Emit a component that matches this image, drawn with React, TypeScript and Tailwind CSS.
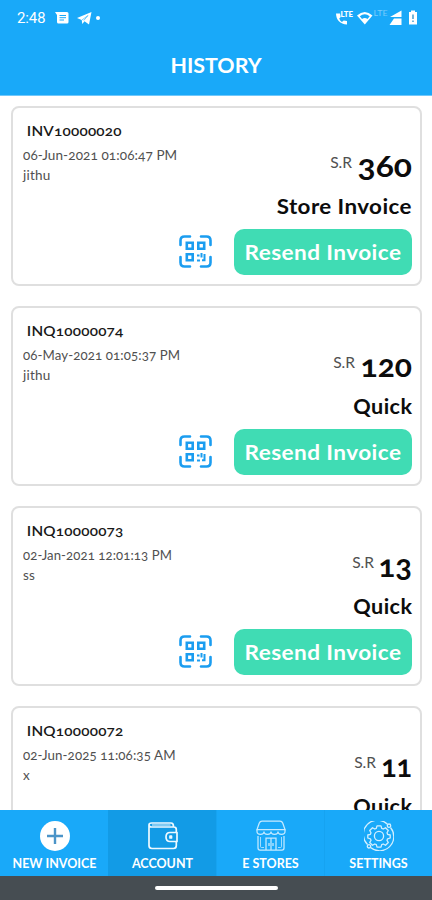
import React from "react";

type Invoice = {
  id: string;
  date: string;
  customer: string;
  amount: string;
  kind: string;
  amountBox: string;
  kindScale: string;
  dateScale: string;
};

const invoices: Invoice[] = [
  { id: "INV10000020", date: "06-Jun-2021 01:06:47 PM", customer: "jithu", amount: "360", kind: "Store Invoice", amountBox: "w-[54px] scale-x-[1.12]", kindScale: "scale-x-[1.065]", dateScale: "scale-x-[1.04]" },
  { id: "INQ10000074", date: "06-May-2021 01:05:37 PM", customer: "jithu", amount: "120", kind: "Quick", amountBox: "w-[51px] scale-x-[1.06]", kindScale: "scale-x-[1.03]", dateScale: "scale-x-[1.02]" },
  { id: "INQ10000073", date: "02-Jan-2021 12:01:13 PM", customer: "ss", amount: "13", kind: "Quick", amountBox: "w-[32px] scale-x-[1.03]", kindScale: "scale-x-[1.03]", dateScale: "scale-x-[1.01]" },
  { id: "INQ10000072", date: "02-Jun-2025 11:06:35 AM", customer: "x", amount: "11", kind: "Quick", amountBox: "w-[30px] scale-x-[0.95]", kindScale: "scale-x-[1.03]", dateScale: "scale-x-[1.025]" },
];

function QrIcon() {
  return (
    <svg className="-mt-px" width="33" height="33" viewBox="0 0 33 33" fill="none" stroke="#1b9df0" strokeWidth="2.6">
      <path strokeLinecap="round" d="M1.5 10V5.5q0-4 4-4H11M22 1.5h5.500q4 0 4 4V10M31.500 22v5.500q0 4-4 4H22M11 31.500H5.500q-4 0-4-4V22" />
      <path d="M7.800 7.800h5.900v5.900H7.800zM19.300 7.800h5.900v5.900h-5.900zM7.800 19.300h5.900v5.900H7.800z" />
      <path strokeWidth="2" d="M18 20.500h2.500M22.500 18v3.500h-1M18 25.500h3M25.500 19v6.200h-2.500" />
    </svg>
  );
}

function Card({ invoice }: { invoice: Invoice }) {
  return (
    <article className="flex h-[180px] shrink-0 justify-between rounded-[8px] border-2 border-[#dfdfdf] bg-white pr-[8px] pl-[10px]">
      <div className="pt-[13px] whitespace-nowrap text-[#505050]">
        <h2 className="w-fit origin-left scale-x-[1.09] pl-[3.500px] text-[14px] leading-5 font-semibold tracking-[0.2px] text-[#181818]">{invoice.id}</h2>
        <p className={`mt-[5px] w-fit origin-left text-[13px] leading-[19px] tracking-[0.1px] ${invoice.dateScale}`}>{invoice.date}</p>
        <p className="w-fit origin-left scale-x-[1.04] text-[13px] leading-[20px] tracking-[0.2px]">{invoice.customer}</p>
      </div>
      <div className="flex flex-col items-end pt-[38px] whitespace-nowrap text-[#0c0c0c]">
        <div className="flex h-[38px] items-start">
          <span className="mt-[6px] mr-[6px] origin-right scale-x-[1.04] text-[15px] leading-5 text-[#505050]">S.R</span>
          <strong className={`flex origin-right justify-end text-[30px] leading-[38px] font-bold ${invoice.amountBox}`}>{invoice.amount}</strong>
        </div>
        <p className={`mt-[8px] origin-right text-[21px] leading-7 font-bold tracking-[0.4px] ${invoice.kindScale}`}>{invoice.kind}</p>
        <div className="mt-[9px] flex items-center gap-[22px]">
          <QrIcon />
          <button className="h-[46px] w-[178px] rounded-[10px] bg-[#40dcb4] text-[21px] font-bold tracking-[0.4px] text-white">
            <span className="inline-block scale-x-[1.075]">Resend Invoice</span>
          </button>
        </div>
      </div>
    </article>
  );
}

function StatusBar() {
  return (
    <div className="flex h-[36px] items-center justify-between pr-[14px] pl-[17px] text-white">
      <div className="flex items-center">
        <span className="w-[38px] font-[Roboto] text-[15px] tracking-[-0.2px] lining-nums">2:48</span>
        <svg className="h-[12px] w-[14px]" viewBox="0 0 14 12">
          <path fill="currentColor" d="M0 0h12q1.500 0 1.500 1.500v8.500q0 1.500-1.500 1.500H3.500Q2 11.500 2 10V3z" />
          <path stroke="#19a9f9" strokeWidth="1" d="M4.500 3.500h6.500M4.500 5.700h6.500M4.500 8h4.500" />
        </svg>
        <svg className="ml-[8px] h-[13px] w-[15px]" viewBox="0 0 15 13">
          <path fill="currentColor" d="M0 6 14.500 0 12 12.500 7.500 9.300 5.300 12 4.700 8z" />
          <path stroke="#19a9f9" strokeWidth=".6" d="m5 8 6-4.500-4.200 5" fill="none" />
        </svg>
        <span className="ml-[4px] size-[4px] rounded-full bg-white" />
      </div>
      <svg className="h-[18px] w-[84px]" viewBox="0 0 84 18" fill="none">
        <path d="M2 4.500c.2 6.500 4 10.500 11 11v-3.500l-3.300-.5-1.800 1.500q-2-1.500-2.700-3.500L6.700 8 6 4.500z" fill="#fff" />
        <text x="6.500" y="7.500" fill="#fff" fontSize="7" fontWeight="900" textLength="12.500" lengthAdjust="spacingAndGlyphs">LTE</text>
        <path d="M23 6.500Q30.800-.5 38.500 6.500L30.800 15.500z" fill="#fff" />
        <path d="M25.800 7.200Q30.800 3.300 35.700 7.200L33.500 10Q30.800 8 28 10z" fill="#19a9f9" />
        <text x="39.500" y="7" fill="#78cbfb" fontSize="7" textLength="14" lengthAdjust="spacingAndGlyphs">LTE</text>
        <path d="M67.500 1.500V8H56zM67.500 9.500V16H55.500L60 9.500z" fill="#fff" />
        <path d="M75 3h2V1.500h4V3h2v12.500h-8z" fill="#fff" />
        <path d="M79 5.500v4.500M79 11.500v1.500" stroke="#3897ca" strokeWidth="1.400" />
      </svg>
    </div>
  );
}

function PlusIcon() {
  return (
    <svg width="30" height="30" viewBox="0 0 30 30">
      <circle cx="15" cy="15" r="15" fill="#fff" />
      <path d="M15 7v16M7 15h16" stroke="#4b94c8" strokeWidth="2.400" />
    </svg>
  );
}

function WalletIcon() {
  return (
    <svg width="30" height="30" viewBox="0 0 30 30" fill="none" stroke="#eef9ff" strokeWidth="1.700" strokeLinejoin="round">
      <path d="M28.300 11.500V8.500q0-2.500-2.500-2.500H3.500Q1 6 1 4t2.500-2H23q2.500 0 2.500 3.500M1 4v20.500q0 3 3 3h21.500q2.800 0 2.800-3v-4" />
      <path d="M29 11.500h-7q-4 0-4 4.500t4 4.500h7z" />
      <path d="M22 15h1.500v2H22z" />
      <path strokeWidth="1" d="M4 4h18.500" />
    </svg>
  );
}

function StoreIcon() {
  return (
    <svg width="30" height="31" viewBox="0 0 30 31" fill="none" stroke="#c6eaff" strokeWidth="1.250">
      <path d="M6 1h18q2 0 2.700 2L29 9.500H1L3.300 3Q4 1 6 1z" />
      <path d="M1 9.500v2q0 2.800 3.500 2.800T8 11.500q0 2.800 3.500 2.800t3.500-2.800q0 2.800 3.500 2.800t3.500-2.800q0 2.800 3.500 2.800t3.500-2.800v-2" />
      <path d="M2 16v12q0 2 2 2h22q2 0 2-2V16M10 30V18h10v12M15 18v12M13 23v3M17 23v3" />
      <path strokeWidth=".8" d="M4.500 17v9.500q0 1 1 1H8M25.500 17v9.500q0 1-1 1H22" />
    </svg>
  );
}

function SettingsIcon() {
  return (
    <svg width="30" height="30" viewBox="0 0 30 30" fill="none" stroke="#d2efff" strokeWidth="1.300" strokeLinejoin="round">
      <path d="M23.500 3.300A14.200 14.200 0 0 0 3.500 23.500M6.500 26.500A14.200 14.200 0 0 0 26.500 6.500" />
      <circle cx="25" cy="4.700" r="1.700" />
      <circle cx="5" cy="25.300" r="1.700" />
      <circle cx="15" cy="15" r="4.600" />
      <path d="M13 4.800h4l.7 2.600 1.500.6 2.300-1.300 2.800 2.800L23 11.800l.6 1.500 2.600.7v3l-2.600.8-.6 1.500 1.300 2.200-2.800 2.800-2.300-1.300-1.500.6-.7 2.600h-4l-.7-2.600-1.500-.6-2.300 1.300-2.800-2.800L7 19.300l-.6-1.500-2.600-.8v-3l2.600-.7.6-1.500-1.300-2.300 2.800-2.800L10.800 8l1.500-.6z" />
    </svg>
  );
}

const tabs = [
  { label: "NEW INVOICE", icon: <PlusIcon />, active: false },
  { label: "ACCOUNT", icon: <WalletIcon />, active: true },
  { label: "E STORES", icon: <StoreIcon />, active: false },
  { label: "SETTINGS", icon: <SettingsIcon />, active: false },
];

export default function App() {
  return (
    <div className="flex h-[900px] w-[432px] flex-col overflow-hidden bg-white font-[Lato,sans-serif] oldstyle-nums">
      <header className="h-[96px] shrink-0 border-b border-[#70c8fb] bg-[#19a9f9]">
        <StatusBar />
        <h1 className="mt-[15px] scale-x-[1.02] text-center text-[21px] leading-7 font-bold text-white">HISTORY</h1>
      </header>
      <main className="flex min-h-0 flex-1 flex-col gap-[20px] overflow-hidden pt-[10px] pr-[10px] pl-[11px]">
        {invoices.map((invoice) => <Card key={invoice.id} invoice={invoice} />)}
      </main>
      <nav className="grid h-[66px] shrink-0 grid-cols-4 bg-[#19a9f9]">
        {tabs.map((tab) => (
          <div key={tab.label} className={`flex flex-col items-center border-l pt-[10px] text-white ${tab.active ? "border-[#129be6] bg-[#129be6]" : "border-[#16a3f1] first:border-[#19a9f9]"}`}>
            <span className="flex h-[31px] items-center">{tab.icon}</span>
            <span className="mt-[5px] text-[12.500px] leading-4 font-bold whitespace-nowrap">{tab.label}</span>
          </div>
        ))}
      </nav>
      <footer className="flex h-[24px] shrink-0 justify-center bg-[#464d52] pt-[10px]">
        <span className="h-[4px] w-[123px] rounded-full bg-white" />
      </footer>
    </div>
  );
}
